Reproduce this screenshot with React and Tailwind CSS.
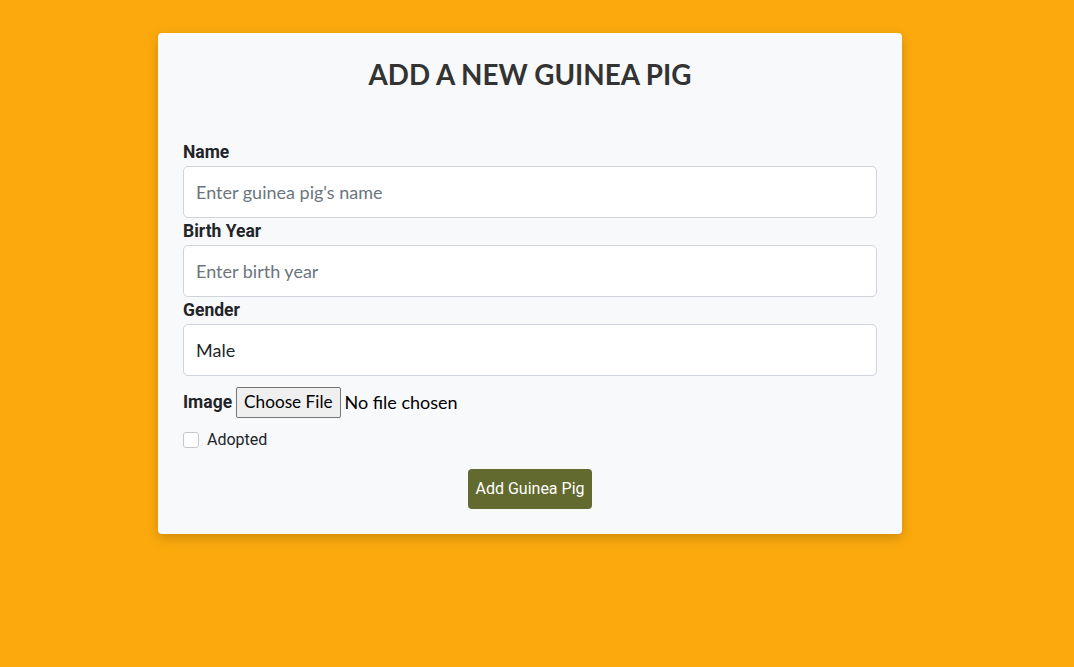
export default function App() {
  return (
    <div className="min-h-[667px] w-full bg-[#fba90d] pt-[33px]" style={{ fontFamily: "Roboto, sans-serif" }}>
      <div className="ml-[158px] w-[744px] rounded-[4px] bg-[#f8f9fa] px-[25px] pb-[25px] pt-[22px] shadow-[0_4px_12px_rgba(0,0,0,0.18)]">
        <h1 className="text-center text-[27.8px] font-bold leading-[40px] text-[#333333]" style={{ fontFamily: "Lato, sans-serif" }}>
          ADD A NEW GUINEA PIG
        </h1>
        <form className="mt-[44px] flex flex-col">
          <label className="mb-[2px] block pt-[1px] text-[17.5px] font-bold leading-[24px] text-[#212529]">Name</label>
          <input
            type="text"
            placeholder="Enter guinea pig's name"
            className="h-[52px] w-full rounded-[5px] border border-[#ced4da] bg-white px-[12px] text-[18px] text-[#212529] placeholder:text-[#6c757d] outline-none"
            style={{ fontFamily: "Lato, sans-serif" }}
          />
          <label className="mb-[2px] block pt-[1px] text-[17.5px] font-bold leading-[24px] text-[#212529]">Birth Year</label>
          <input
            type="text"
            placeholder="Enter birth year"
            className="h-[52px] w-full rounded-[5px] border border-[#ced4da] bg-white px-[12px] text-[18px] text-[#212529] placeholder:text-[#6c757d] outline-none"
            style={{ fontFamily: "Lato, sans-serif" }}
          />
          <label className="mb-[2px] block pt-[1px] text-[17.5px] font-bold leading-[24px] text-[#212529]">Gender</label>
          <div
            className="flex h-[52px] w-full items-center rounded-[5px] border border-[#ced4da] bg-white px-[12px] text-[18px] text-[#212529]"
            style={{ fontFamily: "Lato, sans-serif" }}
          >
            Male
          </div>
          <div className="mt-[10px] flex h-[32px] items-center">
            <span className="text-[17.5px] font-bold text-[#212529]">Image</span>
            <span
              className="ml-[4px] flex h-[31px] items-center rounded-[2px] border border-[#767676] bg-[#efefef] px-[7px] text-[17.2px] text-black"
              style={{ fontFamily: "Lato, sans-serif" }}
            >
              Choose File
            </span>
            <span className="ml-[4px] text-[18px] text-black" style={{ fontFamily: "Lato, sans-serif" }}>
              No file chosen
            </span>
          </div>
          <div className="mt-[10px] flex items-center">
            <span className="h-[16px] w-[16px] rounded-[3px] border border-[#c4c8cc] bg-white"></span>
            <span className="ml-[8px] text-[16px] leading-[24px] text-[#212529]">Adopted</span>
          </div>
          <div className="mt-[17px] flex justify-center">
            <button
              type="button"
              className="h-[40px] w-[124px] rounded-[4px] bg-[#636a2f] text-[16px] text-white"
            >
              Add Guinea Pig
            </button>
          </div>
        </form>
      </div>
    </div>
  );
}
